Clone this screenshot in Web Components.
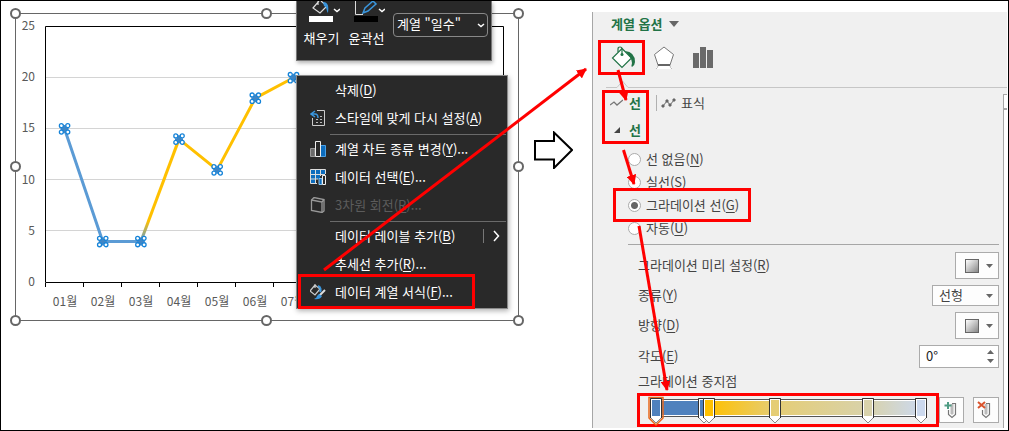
<!DOCTYPE html>
<html lang="ko">
<head>
<meta charset="utf-8">
<title>계열 옵션</title>
<style>
  body {
    margin: 0;
    background: #fff;
    font: 13px/18px "Noto Sans CJK KR", sans-serif;
  }
</style>
</head>
<body>
<guide-figure>
  <guide-stage slot="stage">
    <line-chart></line-chart>
    <mini-toolbar slot="over"></mini-toolbar>
    <context-menu slot="over">
      <menu-item>삭제(<u>D</u>)</menu-item>
      <menu-item icon="reset">스타일에 맞게 다시 설정(<u>A</u>)</menu-item>
      <menu-rule></menu-rule>
      <menu-item icon="chart">계열 차트 종류 변경(<u>Y</u>)...</menu-item>
      <menu-item icon="data">데이터 선택(<u>E</u>)...</menu-item>
      <menu-item icon="cube" disabled>3차원 회전(<u>R</u>)...</menu-item>
      <menu-rule></menu-rule>
      <menu-item submenu>데이터 레이블 추가(<u>B</u>)</menu-item>
      <menu-item>추세선 추가(<u>R</u>)...</menu-item>
      <menu-item icon="format">데이터 계열 서식(<u>F</u>)...</menu-item>
    </context-menu>
  </guide-stage>
  <format-pane slot="pane">
    <line-options></line-options>
    <field-row label="그라데이션 미리 설정" key="R"><swatch-button label="그라데이션 미리 설정"></swatch-button></field-row>
    <field-row label="종류" key="Y"><type-select></type-select></field-row>
    <field-row label="방향" key="D"><swatch-button label="방향"></swatch-button></field-row>
    <field-row label="각도" key="E"><angle-input></angle-input></field-row>
    <gradient-stops></gradient-stops>
  </format-pane>
</guide-figure>

<script>
class BaseElement extends HTMLElement {
  connectedCallback() {
    if (this.shadowRoot) return;
    this.attachShadow({ mode: 'open' });
    this.shadowRoot.innerHTML = this.render();
  }
}

// Outer frame, the step arrow and the red callouts
class GuideFigure extends BaseElement {
  render() {
    return `
      <style>
        :host {
          display: flex;
          align-items: flex-start;
          position: relative;
          box-sizing: border-box;
          min-height: 100vh;
          border: 1px solid #000;
          overflow: hidden;
        }
        .next { flex: none; margin: 130px 19px 0 7px; }
        slot[name="pane"]::slotted(*) { flex: 1; min-width: 0; margin: 11px 1px 2px 0; }
        .callouts { position: absolute; left: 0; top: 0; pointer-events: none; overflow: visible; }
      </style>
      <slot name="stage"></slot>
      <svg class="next" width="40" height="38" fill="#fff" stroke="#000" stroke-width="2">
        <path d="M2 10H21V1.500L39 19L21 37V28.500H2Z"/>
      </svg>
      <slot name="pane"></slot>
      <svg class="callouts" width="1007" height="429" viewBox="1 1 1007 429" fill="none" stroke="#f00" stroke-width="3">
        <defs>
          <marker id="head" viewBox="0 0 10 10" refX="9" refY="5" markerWidth="10" markerHeight="10" markerUnits="userSpaceOnUse" orient="auto">
            <path d="M0 0L10 5L0 10Z" fill="#f00" stroke="none"/>
          </marker>
        </defs>
        <rect x="299.500" y="275.500" width="174" height="32"/>
        <rect x="599.500" y="41.500" width="44" height="32"/>
        <rect x="603.500" y="91.500" width="44" height="51"/>
        <rect x="614.500" y="189.500" width="135" height="31"/>
        <path d="M324 270L586 69" marker-end="url(#head)"/>
        <path d="M618 70L626 100" marker-end="url(#head)"/>
        <path d="M623.500 150L634 184" marker-end="url(#head)"/>
        <path d="M639 226L667 390" marker-end="url(#head)"/>
      </svg>
    `;
  }
}

class GuideStage extends BaseElement {
  render() {
    return `
      <style>
        :host { display: block; position: relative; flex: none; padding: 5px 0 0 7px; }
      </style>
      <slot></slot>
      <slot name="over"></slot>
    `;
  }
}

class LineChart extends BaseElement {
  render() {
    const values = [15, 4, 4, 14, 11, 18, 20];
    const left = 45.5;
    const bottom = 282.5;
    const step = 38.15;
    const points = values.map((v, i) => [left + step * (i + 0.5), bottom - v * 10.24]);
    const path = list => list.map(p => p.join(' ')).join('L');

    const grid = [5, 10, 15, 20].map(v => `<path d="M46 ${Math.round(bottom - v * 10.24) - 0.5}H503"/>`).join('');
    const yLabels = [0, 5, 10, 15, 20, 25].map(v => `<text x="35" y="${Math.round(286 - v * 10.24)}" text-anchor="end">${v}</text>`).join('');
    const xLabels = points.map((p, i) => `<text x="${Math.round(p[0])}" y="306" text-anchor="middle">0${i + 1}월</text>`).join('');
    const ticks = values.map((v, i) => `M${Math.round(left + step * i) - 0.5} 283v4`).join('');
    const markers = points.map(([x, y]) => `
      <g transform="translate(${x} ${y})">
        <path d="M-4 -4L4 4M4 -4L-4 4M0 -4V4M-4 0H4" stroke="#3f86c6" stroke-width="2"/>
        <g fill="#fff" stroke="#1583d8" stroke-width="1.300">
          <circle cx="-3.200" cy="-3.200" r="2"/><circle cx="3.200" cy="-3.200" r="2"/>
          <circle cx="-3.200" cy="3.200" r="2"/><circle cx="3.200" cy="3.200" r="2"/>
        </g>
      </g>`).join('');
    const handles = [[15.5, 13.5], [266.5, 13.5], [518.5, 13.5], [15.5, 166.5], [518.5, 166.5], [15.5, 320.5], [266.5, 320.5], [518.5, 320.5]]
      .map(([x, y]) => `<circle cx="${x}" cy="${y}" r="4.500"/>`).join('');

    return `
      <style>
        :host { display: block; }
        svg { display: block; }
        text { font: 12px "Noto Sans CJK KR", sans-serif; fill: #595959; }
      </style>
      <svg width="518" height="322" viewBox="8 6 518 322" fill="none">
        <defs>
          <linearGradient id="turn" x1="0" y1="1" x2="0" y2="0">
            <stop offset="0" stop-color="#5b9bd5"/><stop offset=".2" stop-color="#ffc000"/>
          </linearGradient>
        </defs>
        <rect x="15.500" y="13.500" width="503" height="307" stroke="#666"/>
        <g stroke="#d4d4d4">${grid}</g>
        <path d="M45.500 282.500V26.500H503.500V282.500Z${ticks}" stroke="#000"/>
        ${yLabels}${xLabels}
        <g stroke-width="3" stroke-linejoin="round">
          <path d="M${path(points.slice(3))}" stroke="#ffc000"/>
          <path d="M${path(points.slice(2, 4))}" stroke="url(#turn)"/>
          <path d="M${path(points.slice(0, 3))}" stroke="#5b9bd5"/>
        </g>
        ${markers}
        <g fill="#fff" stroke="#666" stroke-width="2">${handles}</g>
      </svg>
    `;
  }
}

class MiniToolbar extends BaseElement {
  render() {
    const chevron = '<path d="M0 0l3 2.500l3 -2.500" stroke="#fff" stroke-width="1.500" fill="none"';
    return `
      <style>
        :host {
          display: flex;
          align-items: flex-start;
          position: absolute;
          left: 295px;
          top: 0;
          box-sizing: border-box;
          width: 196px;
          height: 60px;
          padding-left: 2px;
          background: #292929;
          border: 1px solid #777;
          border-top: 0;
          box-shadow: 1px 2px 4px rgba(0, 0, 0, .3);
          color: #fff;
        }
        button {
          display: flex;
          flex-direction: column;
          align-items: center;
          gap: 7px;
          width: 45px;
          padding: 0;
          border: 0;
          background: none;
          color: inherit;
          font: inherit;
        }
        label { position: relative; flex: 1; margin: 12px 3px 0 4px; }
        select {
          appearance: none;
          box-sizing: border-box;
          width: 100%;
          height: 24px;
          padding: 0 3px 2px;
          border: 1px solid #888;
          border-radius: 4px;
          background: none;
          color: #fff;
          font: inherit;
        }
        label svg { position: absolute; right: 3px; top: 10px; }
      </style>
      <button type="button">
        <svg width="36" height="21" viewBox="306 1 36 21" fill="none">
          <path d="M321 1L315 8L322 13L329 6L323 1M320 5V1" stroke="#ddd" stroke-width="1.200"/>
          <path d="M325 2C330 2 331 6 330 13C328 10 329 7 326 6Z" fill="#3a96dd"/>
          <path d="M311 16H335V22H311Z" fill="#fff"/>
          ${chevron} transform="translate(336 9)"/>
        </svg>
        <span>채우기</span>
      </button>
      <button type="button">
        <svg width="36" height="21" viewBox="351 1 36 21" fill="none">
          <path d="M357.500 1V14.500H365" stroke="#ddd"/>
          <path d="M365 13L367 8L375 1L378 4L370 11Z" stroke="#3a96dd" stroke-width="1.500"/>
          <path d="M356 16H380V22H356Z" fill="#000"/>
          ${chevron} transform="translate(381 9)"/>
        </svg>
        <span>윤곽선</span>
      </button>
      <label>
        <select aria-label="차트 요소"><option>계열 "일수"</option></select>
        <svg width="8" height="5">${chevron} transform="translate(1 1)"/></svg>
      </label>
    `;
  }
}

class ContextMenu extends BaseElement {
  render() {
    return `
      <style>
        :host {
          display: block;
          position: absolute;
          left: 295px;
          top: 74px;
          box-sizing: border-box;
          width: 212px;
          padding: 1px 0;
          background: #292929;
          border: 1px solid #8a8a8a;
          box-shadow: 1px 2px 5px rgba(0, 0, 0, .3);
          color: #fff;
        }
      </style>
      <slot></slot>
    `;
  }
}

class MenuRule extends BaseElement {
  render() {
    return `
      <style>
        :host { display: block; height: 1px; margin: 1px 1px 1px 33px; background: #6a6a6a; }
      </style>
    `;
  }
}

const menuIcons = {
  reset: `
    <path d="M7 .500H14.500V15.500H2.500V8" stroke="#ccc"/>
    <path d="M5 1L1 4L5 7M1 4H5Q8 4 8 8" stroke="#3a96dd" stroke-width="1.500"/>
    <path d="M6 9.500h2M6 12.500h2M10 6.500h2M10 9.500h2M10 12.500h2" stroke="#bbb"/>`,
  chart: `
    <path d="M.500 7.500H5V15.500H.500Z" fill="#6a6a6a" stroke="#999"/>
    <path d="M10.500 4.500H15.500V15.500H10.500Z" fill="#0c6cbd" stroke="#4aa0e6"/>
    <path d="M5.500 .500H10.500V15.500H5.500Z" fill="#292929" stroke="#eee"/>`,
  data: `
    <path d="M1 1H15V5H5V14H1Z" fill="#0c6cbd"/>
    <path d="M6 6H10V10H6Z" fill="#0c6cbd"/>
    <path d="M.500 .500H15.500V5M.500 .500V14.500H7M.500 5.500H15M.500 10H8M5.500 .500V14.500M10.500 .500V7" stroke="#ddd"/>
    <path d="M9 9.500H12V15.500H9Z" fill="#0c6cbd" stroke="#8cc4ee"/>
    <path d="M12.500 6.500H15.500V15.500H12.500Z" fill="#292929" stroke="#eee"/>`,
  cube: `
    <path d="M1.500 3L4 .500L14 2.500V14L12 15.500L1.500 13.500Z" stroke="#999" stroke-width="1.300"/>
    <path d="M1.500 3L12 5V15.500M12 5L14 2.500" stroke="#999" stroke-width="1.300"/>`,
  format: `
    <path d="M5 0V4M5 1L0 7L5 11L10 5Z" stroke="#ccc" stroke-width="1.200"/>
    <path d="M8 2C11 3 11 6 10 8" stroke="#3a96dd" stroke-width="2"/>
    <path d="M15 6L9 12" stroke="#ddd" stroke-width="2"/>
    <path d="M9 10L12 12Q10 16 4 15Q7 14 7 12Z" fill="#3a96dd"/>`
};

class MenuItem extends BaseElement {
  render() {
    const more = this.hasAttribute('submenu')
      ? '<svg class="more" width="20" height="14" fill="none"><path d="M.500 0V14" stroke="#777"/><path d="M11 2L15.500 7L11 12" stroke="#fff" stroke-width="1.500"/></svg>'
      : '';
    return `
      <style>
        :host { display: block; }
        button {
          display: flex;
          align-items: center;
          gap: 9px;
          width: 100%;
          height: 28px;
          padding: 0 4px 2px 13px;
          border: 0;
          background: none;
          color: inherit;
          font: inherit;
          text-align: left;
          white-space: nowrap;
        }
        button:disabled { color: #5c5c5c; }
        .icon { flex: none; }
        .more { margin-left: auto; }
        ::slotted(u) { text-underline-offset: 2px; }
      </style>
      <button type="button" ${this.hasAttribute('disabled') ? 'disabled' : ''}>
        <svg class="icon" width="16" height="16" fill="none">${menuIcons[this.getAttribute('icon')] || ''}</svg>
        <span><slot></slot></span>
        ${more}
      </button>
    `;
  }
}

class FormatPane extends BaseElement {
  render() {
    return `
      <style>
        :host {
          display: block;
          box-sizing: border-box;
          padding-left: 13px;
          background: #f0f0f0;
          border-left: 1px solid #a6a6a6;
          color: #444;
        }
        button { padding: 0; border: 0; background: none; color: inherit; font: inherit; }
        svg { display: block; }
        .title {
          display: flex;
          align-items: center;
          gap: 7px;
          height: 24px;
          padding-left: 5px;
          color: #217346;
          font-weight: bold;
        }
        .categories { display: flex; align-items: center; gap: 16px; height: 44px; padding-left: 5px; }
        .notch { display: flex; }
        .notch span { flex: 1; border-bottom: 1px solid #c6c6c6; }
        .body { display: flex; gap: 4px; padding-top: 6px; }
        .content { flex: 1; min-width: 0; }
        .scroll { width: 3px; border-left: 1px solid #a6a6a6; background: #fff; }
        .scroll::before { content: ""; display: block; height: 13px; border-top: 1px solid #a6a6a6; border-bottom: 2px solid #a6a6a6; }
        .tabs { display: flex; align-items: center; height: 18px; padding-left: 4px; }
        .tabs button { display: flex; align-items: center; gap: 6px; height: 16px; }
        .tabs button + button { gap: 5px; margin-left: 15px; padding-left: 4px; border-left: 1px solid #b0b0b0; }
        .tabs .on, .section { color: #217346; font-weight: bold; }
        .section { display: flex; align-items: center; gap: 9px; height: 18px; margin: 9px 0; padding-left: 8px; }
        .fields { display: flex; flex-direction: column; gap: 6px; margin: 4px 0 0 22px; padding: 7px 0 1px; border-top: 1px solid #a6a6a6; }
      </style>
      <button class="title" type="button">계열 옵션
        <svg width="10" height="6"><path d="M0 0H10L5 6Z" fill="#666"/></svg>
      </button>
      <div class="categories">
        <button type="button" aria-label="채우기 및 선">
          <svg width="26" height="24" fill="none">
            <path d="M11 2.500L20.500 12L11 21.500L1.500 12Z" fill="#fff" stroke="#217346" stroke-width="1.200"/>
            <path d="M7 6V3Q7 1 9 1Q11 1 11 3V8" stroke="#217346" stroke-width="1.200"/>
            <circle cx="11" cy="8.500" r="1.500" fill="#217346"/>
            <path d="M14 5Q24 6 24 16Q24 19 21 21Q20 20 21 17Q21 12 14 5Z" fill="#217346"/>
          </svg>
        </button>
        <button type="button" aria-label="효과">
          <svg width="22" height="24" fill="none">
            <path d="M3 23L5 19H17L19 23Z" fill="#fff"/>
            <path d="M5 19Q5 22 3 23M17 19Q17 22 19 23" stroke="#bbb"/>
            <path d="M11 1L20.500 8.500L17 19H5L1.500 8.500Z" fill="#fff" stroke="#777"/>
            <path d="M5 19H17" stroke="#666" stroke-width="2"/>
          </svg>
        </button>
        <button type="button" aria-label="계열 옵션">
          <svg width="23" height="24"><path d="M2 7H8V22H2ZM9 1H15V22H9ZM16 4H22V22H16Z" fill="#6a6a6a"/></svg>
        </button>
      </div>
      <div class="notch">
        <svg width="32" height="8"><path d="M0 7.500H11L16.500 1L22 7.500H32" fill="#f0f0f0" stroke="#c6c6c6"/></svg>
        <span></span>
      </div>
      <div class="body">
        <div class="content">
          <div class="tabs">
            <button class="on" type="button">
              <svg width="13" height="8" fill="none"><path d="M0 6L4 3L7 6L13 1" stroke="#777" stroke-width="1.300"/></svg>
              선
            </button>
            <button type="button">
              <svg width="15" height="10" fill="none" stroke="#666">
                <path d="M2 8L6 3L9 7L13 2"/>
                <path d="M1 7h2v2h-2zM5 2h2v2h-2zM8 6h2v2h-2zM12 1h2v2h-2z" fill="#666"/>
              </svg>
              표식
            </button>
          </div>
          <div class="section">
            <svg width="6" height="6"><path d="M6 0V6H0Z" fill="#444"/></svg>
            선
          </div>
          <slot name="radios"></slot>
          <div class="fields"><slot></slot></div>
        </div>
        <div class="scroll"></div>
      </div>
    `;
  }

  connectedCallback() {
    this.querySelector('line-options').slot = 'radios';
    super.connectedCallback();
  }
}

class LineOptions extends BaseElement {
  render() {
    const options = [['선 없음', 'N'], ['실선', 'S'], ['그라데이션 선', 'G'], ['자동', 'U']];
    return `
      <style>
        :host { display: block; padding-left: 22px; }
        label { display: flex; align-items: center; gap: 5px; height: 23px; }
        span { padding-bottom: 2px; }
        input {
          appearance: none;
          box-sizing: border-box;
          width: 13px;
          height: 13px;
          margin: 0;
          border: 1px solid #ababab;
          border-radius: 50%;
          background: #fff;
        }
        input:checked { background: radial-gradient(circle, #666 3px, #fff 4px); }
        u { text-underline-offset: 2px; }
      </style>
      ${options.map(([text, key]) => `
        <label><input type="radio" name="line" ${key === 'G' ? 'checked' : ''}><span>${text}(<u>${key}</u>)</span></label>
      `).join('')}
    `;
  }
}

class FieldRow extends BaseElement {
  render() {
    return `
      <style>
        :host { display: flex; align-items: center; justify-content: space-between; padding-left: 10px; }
        label { padding-bottom: 2px; line-height: 18px; }
        u { text-underline-offset: 2px; }
      </style>
      <label>${this.getAttribute('label')}(<u>${this.getAttribute('key')}</u>)</label>
      <slot></slot>
    `;
  }

  connectedCallback() {
    super.connectedCallback();
    this.shadowRoot.querySelector('label').addEventListener('click', () => {
      this.firstElementChild.shadowRoot.querySelector('button, select, input').focus();
    });
  }
}

class SwatchButton extends BaseElement {
  render() {
    return `
      <style>
        :host { display: block; }
        button {
          display: flex;
          align-items: center;
          gap: 7px;
          box-sizing: border-box;
          width: 44px;
          height: 27px;
          padding: 0 0 0 9px;
          border: 1px solid #ababab;
          background: #fdfdfd;
        }
        i { box-sizing: border-box; width: 14px; height: 14px; border: 1px solid #666; background: linear-gradient(135deg, #fff, #888); }
      </style>
      <button type="button" aria-label="${this.getAttribute('label')}">
        <i></i>
        <svg width="7" height="4"><path d="M0 0H7L3.500 4Z" fill="#666"/></svg>
      </button>
    `;
  }
}

class TypeSelect extends BaseElement {
  render() {
    return `
      <style>
        :host { display: grid; align-items: center; width: 67px; }
        select, svg { grid-area: 1 / 1; }
        select {
          appearance: none;
          box-sizing: border-box;
          height: 21px;
          padding: 0 6px 2px;
          border: 1px solid #ababab;
          border-radius: 0;
          background: #fdfdfd;
          color: #444;
          font: 13px/18px "Noto Sans CJK KR", sans-serif;
        }
        svg { justify-self: end; margin-right: 6px; pointer-events: none; }
      </style>
      <select aria-label="종류"><option>선형</option></select>
      <svg width="7" height="4"><path d="M0 0H7L3.500 4Z" fill="#666"/></svg>
    `;
  }
}

class AngleInput extends BaseElement {
  render() {
    return `
      <style>
        :host { display: grid; align-items: center; width: 80px; }
        input, svg { grid-area: 1 / 1; }
        input {
          box-sizing: border-box;
          width: 100%;
          height: 23px;
          padding: 0 6px 2px;
          border: 1px solid #ababab;
          background: #fff;
          color: #222;
          font: 13px/18px "Noto Sans CJK KR", sans-serif;
        }
        svg { justify-self: end; margin-right: 5px; }
      </style>
      <input type="text" value="0°" aria-label="각도">
      <svg width="7" height="13"><path d="M0 4H7L3.500 0ZM0 9H7L3.500 13Z" fill="#666"/></svg>
    `;
  }
}

class GradientStops extends BaseElement {
  render() {
    const stops = [[0, '#4f81bd'], [18, '#4f81bd'], [20, '#ffc000'], [45, '#e5cd75'], [80, '#d8d2ab'], [100, '#ccd9ee']];
    const clip = `
      <path d="M10.500 6H13.500V15.500L12 17L10.500 15.500Z" fill="#bbb"/>
      <path d="M12 5.500H15.500V16.500L12 19.500L8.500 16.500V12" fill="none" stroke="#777" stroke-width="1.200"/>`;
    return `
      <style>
        :host { display: block; }
        .name { height: 13px; margin: 0 0 6px 10px; line-height: 13px; }
        .row { display: flex; align-items: center; }
        .box { flex: 1; box-sizing: border-box; height: 34px; padding: 3px 14px 0 15px; margin-left: 9px; border: 3px solid #f00; }
        .track {
          position: relative;
          box-sizing: border-box;
          height: 18px;
          border: 1px solid #555;
          box-shadow: inset 0 0 0 1px #fff;
          background: linear-gradient(90deg, ${stops.map(([at, color]) => `${color} ${at}%`).join(', ')});
        }
        .stop { position: absolute; top: -2px; width: 12px; height: 26px; margin-left: -6px; padding: 0; border: 0; background: none; }
        svg { display: block; overflow: visible; }
        .tool { box-sizing: border-box; width: 25px; height: 26px; padding: 0; border: 1px solid #ababab; background: #fdfdfd; }
        .tool + .tool { width: 26px; margin-left: 9px; }
      </style>
      <div class="name">그라데이션 중지점</div>
      <div class="row">
        <div class="box">
          <div class="track">
            ${stops.map(([at, color], i) => `
              <button class="stop" type="button" aria-label="중지점 ${i + 1}" style="left: ${at}%">
                <svg width="12" height="26">
                  ${i === 0 ? '<path d="M-1 -.500H13V20L6 27L-1 20Z" fill="none" stroke="#e8681c" stroke-width="1.500"/>' : ''}
                  <path d="M.500 .500H11.500V19.500L6 25L.500 19.500Z" fill="#fff" stroke="#888"/>
                  <path d="M.500 20V.500H11.500V20" fill="none" stroke="#333"/>
                  <path d="M2 2H10V18H2Z" fill="${color}"/>
                </svg>
              </button>`).join('')}
          </div>
        </div>
        <button class="tool" type="button" aria-label="중지점 추가">
          <svg width="23" height="24">${clip}<path d="M8 4V11M4.500 7.500H11.500" stroke="#4f9c83" stroke-width="2"/></svg>
        </button>
        <button class="tool" type="button" aria-label="중지점 제거">
          <svg width="24" height="24">${clip}<path d="M4 4L11 10M11 4L4 10" stroke="#d9532c" stroke-width="2"/></svg>
        </button>
      </div>
    `;
  }
}

customElements.define('guide-figure', GuideFigure);
customElements.define('guide-stage', GuideStage);
customElements.define('line-chart', LineChart);
customElements.define('mini-toolbar', MiniToolbar);
customElements.define('context-menu', ContextMenu);
customElements.define('menu-rule', MenuRule);
customElements.define('menu-item', MenuItem);
customElements.define('format-pane', FormatPane);
customElements.define('line-options', LineOptions);
customElements.define('field-row', FieldRow);
customElements.define('swatch-button', SwatchButton);
customElements.define('type-select', TypeSelect);
customElements.define('angle-input', AngleInput);
customElements.define('gradient-stops', GradientStops);
</script>
</body>
</html>
